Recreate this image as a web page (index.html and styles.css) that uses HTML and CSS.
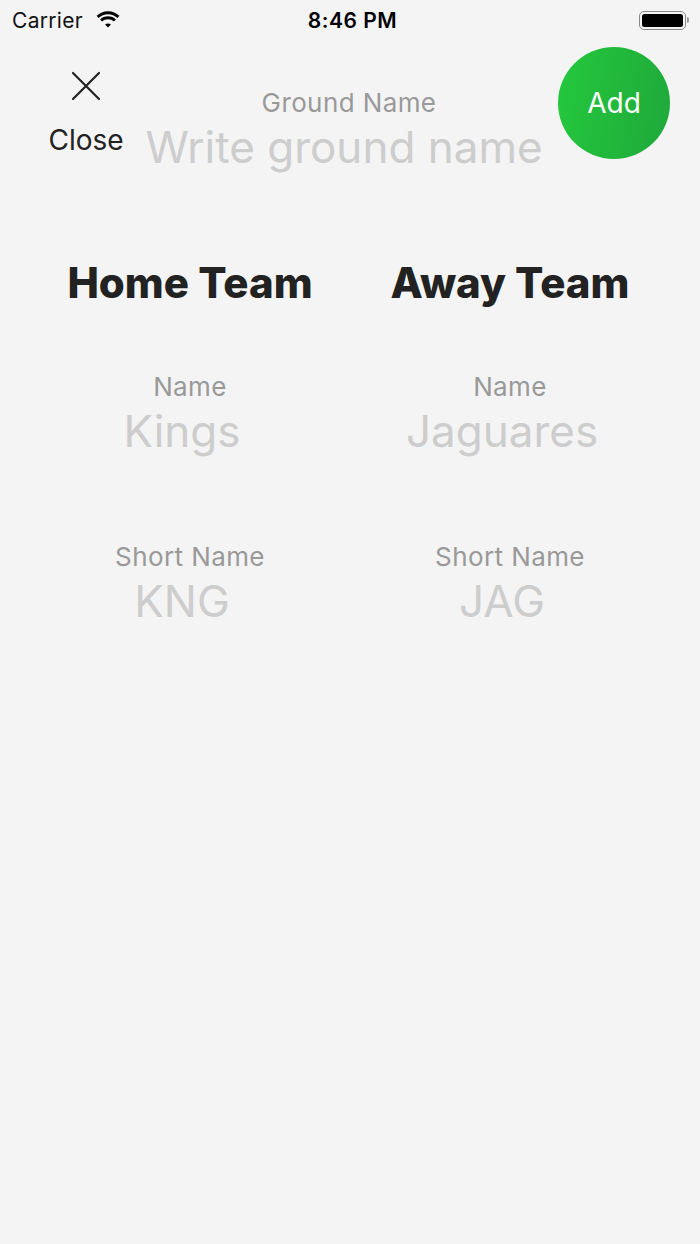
FILE: index.html
```html
<!DOCTYPE html>
<html>
<head>
<meta charset="utf-8">
<link rel="stylesheet" href="styles.css">
</head>
<body>
<div class="screen">
  <div class="status">
    <div class="status-left">
      <span class="carrier">Carrier</span>
      <svg class="wifi" width="26" height="19" viewBox="0 0 26 19">
        <path d="M13 4.2c3.6 0 6.9 1.4 9.4 3.7l2-2.1C21.4 2.9 17.4 1.2 13 1.2S4.6 2.9 1.6 5.8l2 2.1C6.1 5.6 9.4 4.2 13 4.2z" fill="#000"/>
        <path d="M13 9.2c2.2 0 4.3 0.9 5.8 2.3l2.1-2.1C18.8 7.4 16 6.2 13 6.2S7.2 7.4 5.1 9.4l2.1 2.1c1.5-1.4 3.6-2.3 5.8-2.3z" fill="#000"/>
        <path d="M13 13.4c1.1 0 2.1 0.4 2.9 1.1l-2.9 3.1-2.9-3.1c0.8-0.7 1.8-1.1 2.9-1.1z" fill="#000"/>
      </svg>
    </div>
    <div class="time">8:46 PM</div>
    <div class="status-right">
      <div class="battery"><div class="battery-fill"></div></div>
      <div class="battery-tip"></div>
    </div>
  </div>

  <div class="header">
    <div class="close">
      <svg class="close-icon" width="30" height="30" viewBox="0 0 30 30">
        <path d="M2 2L28 28M28 2L2 28" stroke="#222" stroke-width="2.2" stroke-linecap="round"/>
      </svg>
      <span class="close-label">Close</span>
    </div>
    <div class="ground">
      <div class="label">Ground Name</div>
      <div class="placeholder big">Write ground name</div>
    </div>
    <div class="add">Add</div>
  </div>

  <div class="teams">
    <div class="team">
      <h2 class="team-title">Home Team</h2>
      <div class="field">
        <div class="label">Name</div>
        <div class="placeholder value">Kings</div>
      </div>
      <div class="field">
        <div class="label">Short Name</div>
        <div class="placeholder value">KNG</div>
      </div>
    </div>
    <div class="team">
      <h2 class="team-title">Away Team</h2>
      <div class="field">
        <div class="label">Name</div>
        <div class="placeholder value">Jaguares</div>
      </div>
      <div class="field">
        <div class="label">Short Name</div>
        <div class="placeholder value">JAG</div>
      </div>
    </div>
  </div>
</div>
</body>
</html>
```

FILE: styles.css
```css
html, body {
  margin: 0;
  padding: 0;
  background: #f4f4f4;
}

.screen {
  width: 700px;
  height: 1244px;
  background: #f4f4f4;
  font-family: Inter, "Noto Sans", sans-serif;
  color: #222;
}

.status {
  height: 40px;
  display: grid;
  grid-template-columns: 1fr auto 1fr;
  align-items: center;
  padding: 0 11px 0 12px;
}

.status-left {
  display: flex;
  align-items: center;
  gap: 12px;
}

.carrier {
  font-size: 21px;
  color: #111;
  letter-spacing: 0.3px;
}

.wifi {
  margin-top: -2px;
}

.time {
  font-size: 21px;
  font-weight: 600;
  color: #000;
  margin-left: 4px;
  letter-spacing: 0.5px;
}

.status-right {
  display: flex;
  align-items: center;
  justify-content: flex-end;
}

.battery {
  border: 1.5px solid #888;
  border-radius: 5px;
  padding: 2px;
  box-sizing: border-box;
  width: 47px;
  height: 19px;
}

.battery-fill {
  width: 100%;
  height: 100%;
  background: #000;
  border-radius: 2.5px;
}

.battery-tip {
  width: 2px;
  height: 6px;
  background: #999;
  border-radius: 0 2px 2px 0;
  margin-left: 1px;
}

.header {
  display: grid;
  grid-template-columns: 172px minmax(0, 1fr) 112px;
  padding: 7px 30px 0 0;
  height: 146px;
  box-sizing: border-box;
}

.close {
  display: flex;
  flex-direction: column;
  align-items: center;
  padding-top: 24px;
}

.close-icon {
  display: block;
}

.close-label {
  font-size: 28px;
  margin-top: 22px;
  color: #222;
}

.ground {
  text-align: center;
  padding-right: 32px;
  padding-top: 41px;
}

.label {
  font-size: 26px;
  letter-spacing: 0.4px;
  color: #999;
  line-height: 30px;
}

.placeholder {
  color: #cdcdcd;
}

.big {
  font-size: 44px;
  line-height: 54px;
  margin: 2px -20px 0 -30px;
  white-space: nowrap;
}

.add {
  width: 112px;
  height: 112px;
  border-radius: 50%;
  background: linear-gradient(100deg, #24c93c 0%, #1fa83b 100%);
  color: #fff;
  font-size: 28px;
  display: flex;
  align-items: center;
  justify-content: center;
}

.teams {
  display: grid;
  grid-template-columns: 380px 260px;
  padding-top: 71px;
}

.team {
  display: flex;
  flex-direction: column;
  align-items: center;
}

.team-title {
  margin: 0;
  font-size: 42px;
  font-weight: 800;
  color: #222;
  line-height: 52px;
  letter-spacing: 0;
}

.field {
  display: flex;
  flex-direction: column;
  align-items: center;
}

.team .field:nth-of-type(1) {
  margin-top: 63px;
}

.team .field + .field {
  margin-top: 84px;
}

.value {
  font-size: 44px;
  line-height: 54px;
  margin-top: 2px;
  margin-right: 16px;
}
```
